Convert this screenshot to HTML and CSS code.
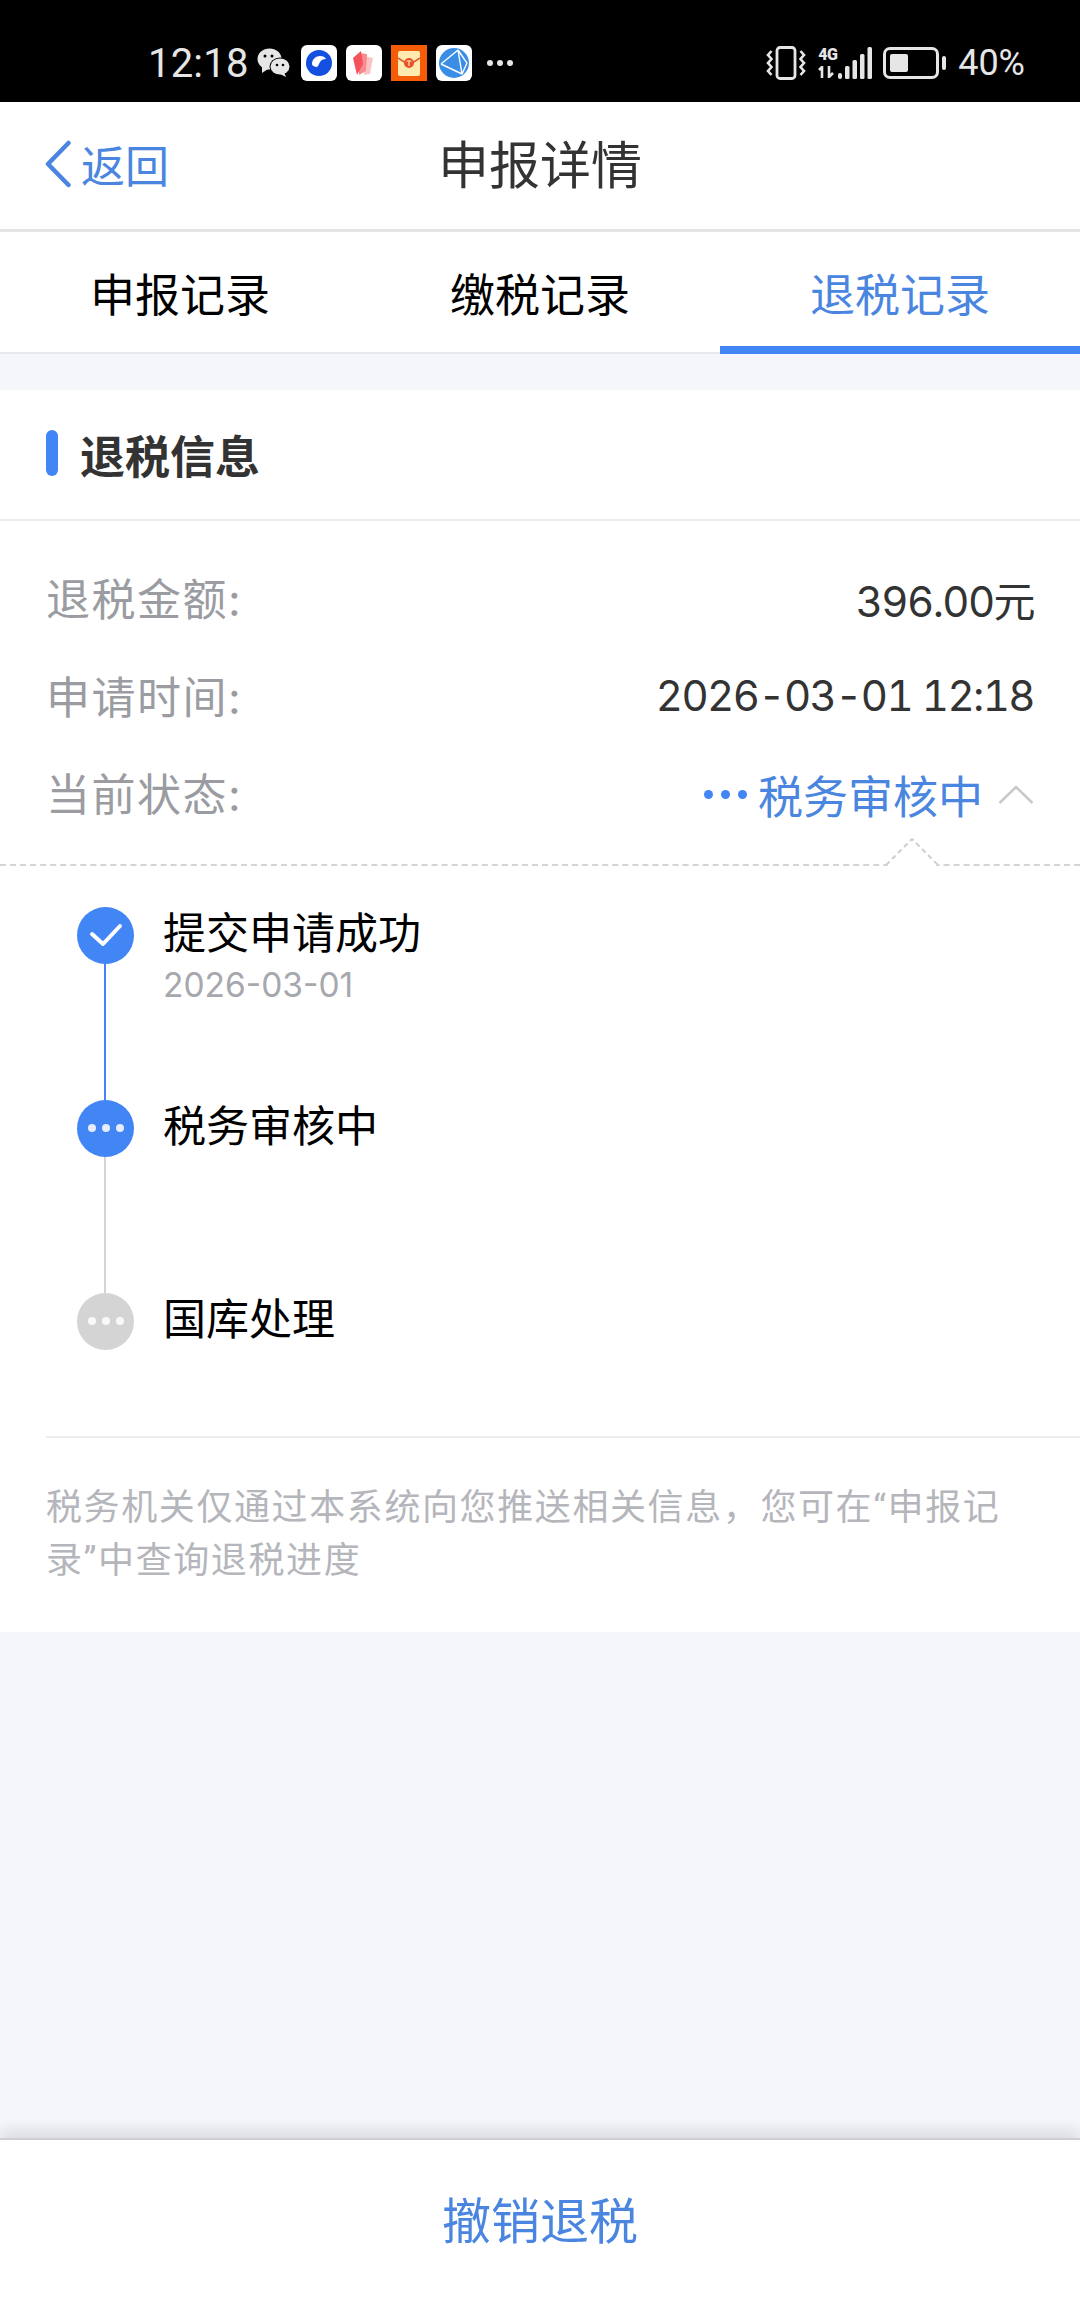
FILE: index.html
```html
<!DOCTYPE html>
<html lang="zh-CN">
<head>
<meta charset="utf-8">
<title>申报详情</title>
<link rel="stylesheet" href="styles.css">
</head>
<body>
<div class="page">
  <header class="status">
    <span class="clock">12:18</span>
    <svg class="wechat" width="34" height="30" viewBox="0 0 34 30"><ellipse cx="12.500" cy="11" rx="12" ry="10.500" fill="#e6e6e6"/><path d="M5 18l0 7 6-4z" fill="#e6e6e6"/><ellipse cx="23" cy="18.500" rx="10.500" ry="9" fill="#000"/><ellipse cx="23" cy="18.500" rx="9.500" ry="8" fill="#e6e6e6"/><path d="M27 24l2 5-6-3z" fill="#e6e6e6"/><circle cx="8" cy="8" r="1.500" fill="#000"/><circle cx="15" cy="8" r="1.500" fill="#000"/><circle cx="20" cy="17" r="1.300" fill="#000"/><circle cx="26" cy="17" r="1.300" fill="#000"/></svg>
    <svg class="app" width="36" height="36" viewBox="0 0 36 36"><rect width="36" height="36" rx="6" fill="#fff"/><circle cx="18" cy="18" r="13" fill="#1450e0"/><path d="M11 19c0-5 4-8 8-8 3 0 5 1 6 3-3 0-5 1-6 3l-2 4c-1 1.500-2 1-3.500.5C12 21 11 20 11 19z" fill="#fff"/></svg>
    <svg class="app" width="36" height="36" viewBox="0 0 36 36"><rect width="36" height="36" rx="6" fill="#fff"/><path d="M18 11l9 2-3 16-6 1z" fill="#fbc4c4"/><path d="M13 8l8 1-1 17-7 4z" fill="#f98a8e"/><path d="M7 13l8-7 2 13-6 11z" fill="#f4525c"/></svg>
    <svg class="app" width="36" height="36" viewBox="0 0 36 36"><rect width="36" height="36" fill="#f65c08"/><rect x="7" y="6" width="22" height="25" rx="2" fill="#fdeab0"/><path d="M7 13l11 7 11-7" fill="none" stroke="#d8622a" stroke-width="1.500"/><circle cx="18" cy="18" r="5" fill="#e8502a"/><path d="M15.500 16h5M18 16v5" stroke="#fde6b0" stroke-width="1.200"/></svg>
    <svg class="app" width="36" height="36" viewBox="0 0 36 36"><rect width="36" height="36" rx="6" fill="#fff"/><circle cx="18" cy="18" r="15" fill="#3a8ee6"/><path d="M5 19L22 5M5 19l21 10M22 5l9 13-5 11M22 5l4 24" fill="none" stroke="#fff" stroke-width="1.400"/></svg>
    <span class="more"><i></i><i></i><i></i></span>
    <span class="status-gap"></span>
    <svg width="40" height="34" viewBox="0 0 40 34"><rect x="11" y="1.500" width="18" height="31" rx="3" fill="none" stroke="#e6e6e6" stroke-width="2.800"/><path d="M5.500 5L2 9l3.500 4L2 17l3.500 4L2 25l3.500 4M34.500 5L38 9l-3.500 4 3.500 4-3.500 4 3.500 4-3.500 4" fill="none" stroke="#e6e6e6" stroke-width="2.600"/></svg>
    <span class="net">
      <span class="net-type"><b>4G</b>
        <svg width="18" height="12" viewBox="0 0 18 12"><path d="M4 12V1L1 4M11 0v11l4-4" fill="none" stroke="#e6e6e6" stroke-width="2.600"/></svg>
      </span>
      <svg width="35" height="34" viewBox="0 0 35 34"><g fill="#e6e6e6"><rect x="0" y="27" width="4" height="6" rx="2"/><rect x="7" y="20" width="4.500" height="13" rx="1.500"/><rect x="14.500" y="14" width="4.500" height="19" rx="1.500"/><rect x="22" y="8" width="4.500" height="25" rx="1.500"/><rect x="29.500" y="1" width="4.500" height="32" rx="1.500"/></g></svg>
    </span>
    <span class="battery"><span class="battery-level"></span></span><span class="battery-cap"></span>
    <span class="percent">40%</span>
  </header>

  <nav class="nav">
    <a class="back">
      <svg width="28" height="48" viewBox="0 0 28 48"><path d="M24.500 3L4 24l20.500 21" fill="none" stroke="#4a86e0" stroke-width="4.500" stroke-linecap="round" stroke-linejoin="round"/></svg>
      <span>返回</span>
    </a>
    <h1 class="nav-title">申报详情</h1>
  </nav>

  <div class="tabs">
    <div class="tab">申报记录</div>
    <div class="tab">缴税记录</div>
    <div class="tab tab-active">退税记录</div>
  </div>

  <section class="card">
    <h2 class="card-head"><span class="bar"></span>退税信息</h2>
    <div class="rows">
      <div class="row"><span class="label">退税金额:</span><span class="value">396.00元</span></div>
      <div class="row"><span class="label">申请时间:</span><span class="value">2026-03-01 12:18</span></div>
      <div class="row"><span class="label">当前状态:</span>
        <span class="value value-state"><span class="state-dots"><i></i><i></i><i></i></span>税务审核中
          <svg class="chev" width="36" height="20" viewBox="0 0 36 20"><path d="M1.500 18L18 2l16.500 16" fill="none" stroke="#c8c8c8" stroke-width="2.500"/></svg>
        </span>
      </div>
    </div>
    <div class="dashed">
      <svg class="notch" width="54" height="30" viewBox="0 0 54 30"><path d="M1 27L27 1l26 26" fill="#fff" stroke="#cfcfcf" stroke-width="2" stroke-dasharray="5 3.500"/><rect x="3" y="26" width="48" height="4" fill="#fff"/></svg>
    </div>
    <ol class="timeline">
      <li class="step step-done">
        <span class="dot"><svg width="34" height="24" viewBox="0 0 34 24"><path d="M3 11l11 10L31 3" fill="none" stroke="#fff" stroke-width="4" stroke-linecap="round" stroke-linejoin="round"/></svg></span>
        <div class="step-body"><div class="step-title">提交申请成功</div><div class="step-date">2026-03-01</div></div>
      </li>
      <li class="step step-now">
        <span class="dot"><i></i><i></i><i></i></span>
        <div class="step-body"><div class="step-title">税务审核中</div></div>
      </li>
      <li class="step step-todo">
        <span class="dot"><i></i><i></i><i></i></span>
        <div class="step-body"><div class="step-title">国库处理</div></div>
      </li>
    </ol>
    <p class="note">税务机关仅通过本系统向您推送相关信息，您可在“申报记录”中查询退税进度</p>
  </section>

  <div class="spacer"></div>
  <footer class="footer">撤销退税</footer>
</div>
</body>
</html>
```
FILE: styles.css
```css
* { box-sizing: border-box; }
html, body { margin: 0; padding: 0; }
body { font-family: "Noto Sans CJK SC", "Noto Sans", sans-serif; background: #f4f6fa; }
.page { width: 1080px; height: 2310px; display: flex; flex-direction: column; overflow: hidden; }

.status { height: 102px; flex: none; background: #000; color: #e6e6e6; display: flex; align-items: center; padding: 24px 55px 0 148px; }
.clock { font: 400 40px/1 "Roboto", sans-serif; width: 109px; letter-spacing: .2px; padding-top: 2px; }
.wechat { margin-right: 10px; }
.app { margin-right: 9px; flex: none; }
.more { display: flex; gap: 4px; margin-left: 6px; }
.more i { width: 6px; height: 6px; border-radius: 50%; background: #e6e6e6; }
.status-gap { flex: 1; }
.net { display: flex; align-items: center; margin-left: 12px; }
.net-type { display: flex; flex-direction: column; gap: 4px; width: 20px; font: 700 16px/14px "Roboto", sans-serif; }
.net-type b { display: block; white-space: nowrap; letter-spacing: -.5px; }
.battery { width: 56px; height: 32px; margin-left: 10px; border: 3px solid #e6e6e6; border-radius: 7px; padding: 4px; display: flex; }
.battery-level { width: 18px; border-radius: 2px; background: #e6e6e6; }
.battery-cap { width: 4px; height: 14px; margin-left: 3px; border-radius: 2px; background: #e6e6e6; }
.percent { margin-left: 12px; font: 400 36px/1 "Roboto", sans-serif; }

.nav { height: 130px; flex: none; background: #fff; border-bottom: 3px solid #e4e4e6; display: flex; align-items: center; position: relative; padding: 0 0 7px 44px; }
.back { display: flex; align-items: center; gap: 9px; color: #4a86e0; font-size: 44px; padding-top: 4px; }
.nav-title { position: absolute; left: 0; right: 0; text-align: center; margin: 0; font-size: 51px; font-weight: 400; color: #333; }

.tabs { height: 122px; flex: none; background: #fff; border-bottom: 2px solid #e8e8ec; display: flex; }
.tab { flex: 1; display: flex; align-items: center; justify-content: center; font-size: 45px; color: #000; }
.tab-active { color: #4a86e0; box-shadow: inset 0 -8px 0 #4285f4; margin-bottom: -2px; padding-bottom: 2px; }

.card { margin-top: 36px; background: #fff; flex: none; }
.card-head { height: 131px; margin: 0; display: flex; align-items: center; gap: 22px; padding-left: 46px; font-size: 45px; font-weight: 700; color: #333; border-bottom: 2px solid #ececee; }
.bar { width: 12px; height: 46px; border-radius: 6px; background: #4285f4; margin-bottom: 4px; }
.rows { padding: 30px 46px 23px; }
.row { height: 97.500px; display: flex; justify-content: space-between; align-items: center; font-size: 44px; }
.label { color: #9a9ca2; font-family: "Inter", "Noto Sans CJK SC", sans-serif; letter-spacing: 1.500px; padding-bottom: 5px; }
.value { color: #333; font-family: "Inter", "Noto Sans CJK SC", sans-serif; font-size: 42px; font-feature-settings: "tnum"; letter-spacing: -1.600px; padding-bottom: 3px; }
.value-state { display: flex; align-items: center; color: #4a86e0; font-size: 45px; letter-spacing: 0; padding-bottom: 0; }
.state-dots { display: flex; gap: 8px; margin-right: 11px; }
.state-dots i { width: 9px; height: 9px; border-radius: 50%; background: #4285f4; }
.chev { margin-left: 15px; }

.dashed { height: 0; border-top: 2px dashed #d4d4d4; position: relative; margin-top: -3px; }
.notch { position: absolute; left: 885px; top: -28px; }

.timeline { list-style: none; margin: 0; padding: 41px 0 0 77px; height: 570px; }
.step { display: flex; height: 193px; position: relative; gap: 29px; }
.dot { flex: none; width: 57px; height: 57px; border-radius: 50%; display: flex; align-items: center; justify-content: center; gap: 6px; position: relative; }
.dot i { width: 8px; height: 8px; border-radius: 50%; background: rgba(255,255,255,.85); }
.step-done .dot, .step-now .dot { background: #4285f4; }
.step-todo .dot { background: #d4d4d4; }
.step::after { content: ""; position: absolute; left: 27px; top: 57px; bottom: 0; width: 2px; }
.step-done::after { background: #4285f4; }
.step-now::after { background: #d4d4d4; }
.step-todo::after { display: none; }
.step-title { font-size: 43px; line-height: 52px; color: #000; margin-top: -3px; }
.step-date { font: 400 33.500px/46px "Inter", sans-serif; color: #a6a8ae; margin-top: 6px; }

.note { margin: 0 0 0 46px; padding: 44px 50px 44px 0; border-top: 2px solid #ececee; font-family: "Roboto", "Noto Sans CJK SC", sans-serif; font-size: 36px; letter-spacing: 1.600px; line-height: 53px; color: #b4b6bb; }

.spacer { flex: 1; }
.footer { height: 172px; flex: none; background: #fff; border-top: 2px solid #cfcfd2; box-shadow: 0 -8px 14px rgba(0,0,0,.10); display: flex; align-items: center; justify-content: center; font-size: 49px; color: #4a86e0; position: relative; padding-bottom: 16px; }
```
